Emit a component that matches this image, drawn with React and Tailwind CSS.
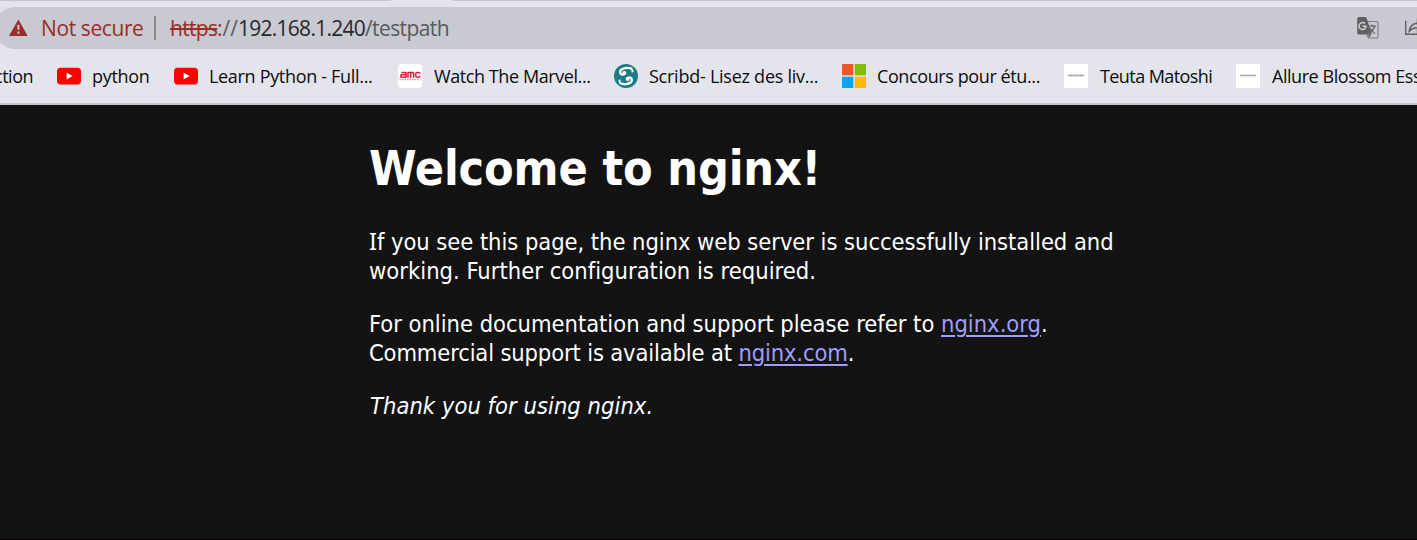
function YouTubeIcon() {
  return (
    <svg viewBox="0 0 24 24" className="size-6 shrink-0">
      <rect x="0" y="3.8" width="24" height="16.6" rx="3.6" fill="#ff0000" />
      <path d="M9.6 8.8v6.6l6-3.3z" fill="#fff" />
    </svg>
  );
}

function AmcIcon() {
  return (
    <svg viewBox="0 0 24 24" className="size-6 shrink-0">
      <rect width="24" height="24" rx="4" fill="#fff" />
      <g fill="none" stroke="#d8203c" strokeWidth="1.5" strokeLinejoin="round">
        <path d="M3.3 8.4H8v4.8H3.4c-1-.2-1.2-2.4.6-2.4H8" />
        <path d="M10 13.8V8.4h5c.5 0 .7.3.7.8v4.6M12.8 8.4v5.400" />
        <path d="M22 9.8c0-1-.5-1.4-1.4-1.4h-1.4c-1 0-1.4.5-1.4 1.4v2c0 1 .5 1.4 1.4 1.4h1.4c.9 0 1.4-.4 1.4-1.4" />
      </g>
      <path d="M1.5 15.5H22.500" stroke="#e88a9a" strokeWidth="1.500" strokeDasharray="1.500 1" />
    </svg>
  );
}

function ScribdIcon() {
  return (
    <svg viewBox="0 0 24 24" className="size-6 shrink-0">
      <circle cx="12" cy="12" r="12" fill="#1e7b85" />
      <g fill="none" stroke="#fff" strokeWidth="2.300" strokeLinecap="round">
        <path d="M17.600 4.700C14 2.900 7 3.900 6.200 7.600c-.4 2.400 2.200 3.700 4.200 2.500" />
        <path d="M6.400 19.300c3.600 1.800 10.600.8 11.400-2.900.4-2.400-2.200-3.700-4.200-2.500" />
      </g>
      <circle cx="10.400" cy="9" r="2" fill="#fff" />
      <circle cx="13.600" cy="15" r="2" fill="#fff" />
      <path d="M17.400 5.500a1.600 1.600 0 1 1 .1 3M6.600 18.500a1.600 1.600 0 1 1-.1-3" fill="#fff" />
    </svg>
  );
}

function MicrosoftIcon() {
  return (
    <svg viewBox="0 0 24 24" className="size-6 shrink-0">
      <path d="M0 0h11.300v11.300H0z" fill="#f35325" />
      <path d="M12.700 0H24v11.300H12.700z" fill="#81bc06" />
      <path d="M0 12.700h11.300V24H0z" fill="#05a6f0" />
      <path d="M12.700 12.700H24V24H12.700z" fill="#ffba08" />
    </svg>
  );
}

function TeutaIcon() {
  return (
    <svg viewBox="0 0 24 24" className="size-6 shrink-0">
      <path d="M0 0h24v24H0z" fill="#fff" />
      <path d="M4 11.500h16" stroke="#cfcfcf" strokeWidth="2.200" />
      <path d="M4 11.500h16" stroke="#999" strokeWidth="1.200" strokeDasharray="1.600 .8" />
    </svg>
  );
}

function TranslateIcon() {
  return (
    <svg viewBox="0 0 22 22" className="size-[22px] shrink-0">
      <path d="M10 4.500h9.700a1.300 1.300 0 0 1 1.300 1.300v13.900a1.300 1.300 0 0 1-1.300 1.300H11.500l-2-4" fill="none" stroke="#7c7c80" strokeWidth="1.100" />
      <path d="M2 0h6.300a1.500 1.500 0 0 1 1.400 1L14.800 17.500H2A1.800 1.800 0 0 1 .2 15.700V1.800A1.800 1.800 0 0 1 2 0z" fill="#5f6164" />
      <path d="M11.200 17.700h3.200l-2.700 3.300z" fill="#5f6164" />
      <path d="M8 6.600A3.500 3.500 0 1 0 9 9.200H5.700" fill="none" stroke="#d4d4da" strokeWidth="1.400" />
      <path d="M11.500 9.200H19M15 7.600v1.600M17.500 9.500c-.7 2.800-2.300 4.600-4 6M13 11c1 2 2.700 4 4.900 5.500" fill="none" stroke="#66686b" strokeWidth="1.300" />
    </svg>
  );
}

function ShareIcon() {
  return (
    <svg viewBox="0 0 22 22" className="size-[22px] shrink-0">
      <path d="M.7 3.700v13.600h18M4.200 14.200C5 9.500 8 6.500 12.500 6.200V2.500l7 6-7 6v-3.700c-3.500 0-6 1-8.300 3.400z" fill="none" stroke="#5f6164" strokeWidth="1.400" />
    </svg>
  );
}

const bookmarks = [
  { icon: YouTubeIcon, label: "python", box: "w-[117px] gap-[11px]", text: "tracking-[-0.3px]" },
  { icon: YouTubeIcon, label: "Learn Python - Full...", box: "w-[224px] gap-[11px]", text: "tracking-[-0.32px]" },
  { icon: AmcIcon, label: "Watch The Marvel...", box: "w-[216px] gap-3", text: "tracking-[-0.42px]" },
  { icon: ScribdIcon, label: "Scribd- Lisez des liv...", box: "w-[228px] gap-[11px]", text: "tracking-[-0.25px]" },
  { icon: MicrosoftIcon, label: "Concours pour étu...", box: "w-[222px] gap-[11px]", text: "tracking-[-0.4px]" },
  { icon: TeutaIcon, label: "Teuta Matoshi", box: "w-[172px] gap-3", text: "tracking-[-0.58px]" },
  { icon: TeutaIcon, label: "Allure Blossom Ess", box: "w-[190px] gap-3", text: "tracking-[-0.45px]" },
];

function AddressBar() {
  return (
    <div className="-ml-[6px] flex h-[42px] w-[1446px] shrink-0 items-center rounded-l-[21px] bg-[#c9c9d1] text-[21px] leading-[42px]">
      <svg viewBox="0 0 20 18" className="ml-[15px] h-[18px] w-5 shrink-0">
        <path d="M9.400.500 18.700 17H0z" fill="#9b2c27" />
        <path d="M9.400 5.800v5M9.400 12.500v2.200" stroke="#d2c4ca" strokeWidth="2" />
      </svg>
      <span className="ml-3 w-[113px] tracking-[-0.4px] text-[#9b2c27]">Not secure</span>
      <span className="h-6 w-[2px] bg-[#87878c]" />
      <span className="ml-[14px] flex whitespace-pre">
        <span className="w-[47px] tracking-[-0.7px] text-[#9b2c27] line-through decoration-2">https</span>
        <span className="w-[21px] text-[#58595d]"><span className="text-[#9b2c27]">:</span>//</span>
        <span className="w-[127px] tracking-[-0.74px] text-[#27282b]">192.168.1.240</span>
        <span className="tracking-[-0.6px] text-[#58595d]">/testpath</span>
      </span>
      <span className="ml-auto flex w-[83px] gap-[26px]">
        <TranslateIcon />
        <ShareIcon />
      </span>
    </div>
  );
}

function Bookmarks() {
  return (
    <nav className="flex h-[54px] items-center overflow-hidden whitespace-nowrap border-b-2 border-[#c5c5cb] pb-[2px] text-[18px] leading-6 text-[#0c0c0e]">
      <span className="flex w-[57px] shrink-0 justify-end pb-px pr-6 tracking-[-0.5px]">ction</span>
      {bookmarks.map(({ icon: Icon, label, box, text }) => (
        <a key={label} className={"flex shrink-0 items-center " + box}>
          <Icon />
          <span className={"pb-px " + text}>{label}</span>
        </a>
      ))}
    </nav>
  );
}

export default function App() {
  return (
    <div className="flex h-[540px] w-[1417px] flex-col overflow-hidden bg-[#131313]">
      <header className="flex h-[105px] shrink-0 flex-col overflow-hidden bg-[#e4e4ed] font-['Open_Sans',sans-serif] font-normal">
        <div className="flex h-[7px] shrink-0">
          <span className="h-px w-[391px] bg-[#c3c2d8]" />
          <span className="ml-[62px] h-px flex-1 bg-[#c3c2d8]" />
        </div>
        <div className="flex h-[42px] shrink-0 overflow-hidden">
          <AddressBar />
        </div>
        <div className="mt-[2px]"><Bookmarks /></div>
      </header>
      <main className="flex-1 border-b border-[#0b0508] pl-[369px] pt-[34px] text-[23.5px] leading-[29px] whitespace-nowrap text-white font-['DejaVu_Sans_Condensed','DejaVu_Sans',sans-serif]">
        <h1 className="text-[48px] leading-[58px] font-bold tracking-[-0.15px]">Welcome to nginx!</h1>
        <p className="mt-[30px]">
          <span className="block tracking-[-0.05px]"><span className="font-['Noto_Sans']">I</span>f you see this page, the nginx web server is successfully installed and</span>
          <span className="block tracking-[0.02px]">working. Further configuration is required.</span>
        </p>
        <p className="mt-6">
          <span className="block tracking-[-0.02px]">
            For online documentation and support please refer to{" "}
            <a className="tracking-normal text-[#9e9eff] underline decoration-2 underline-offset-[3px]">nginx.org</a>.
          </span>
          <span className="block tracking-[-0.15px]">
            Commercial support is available at{" "}
            <a className="text-[#9e9eff] underline decoration-2 underline-offset-[3px]">nginx.com</a>.
          </span>
        </p>
        <p className="mt-6 pl-px italic tracking-[0.04px]">Thank you for using nginx.</p>
      </main>
    </div>
  );
}
